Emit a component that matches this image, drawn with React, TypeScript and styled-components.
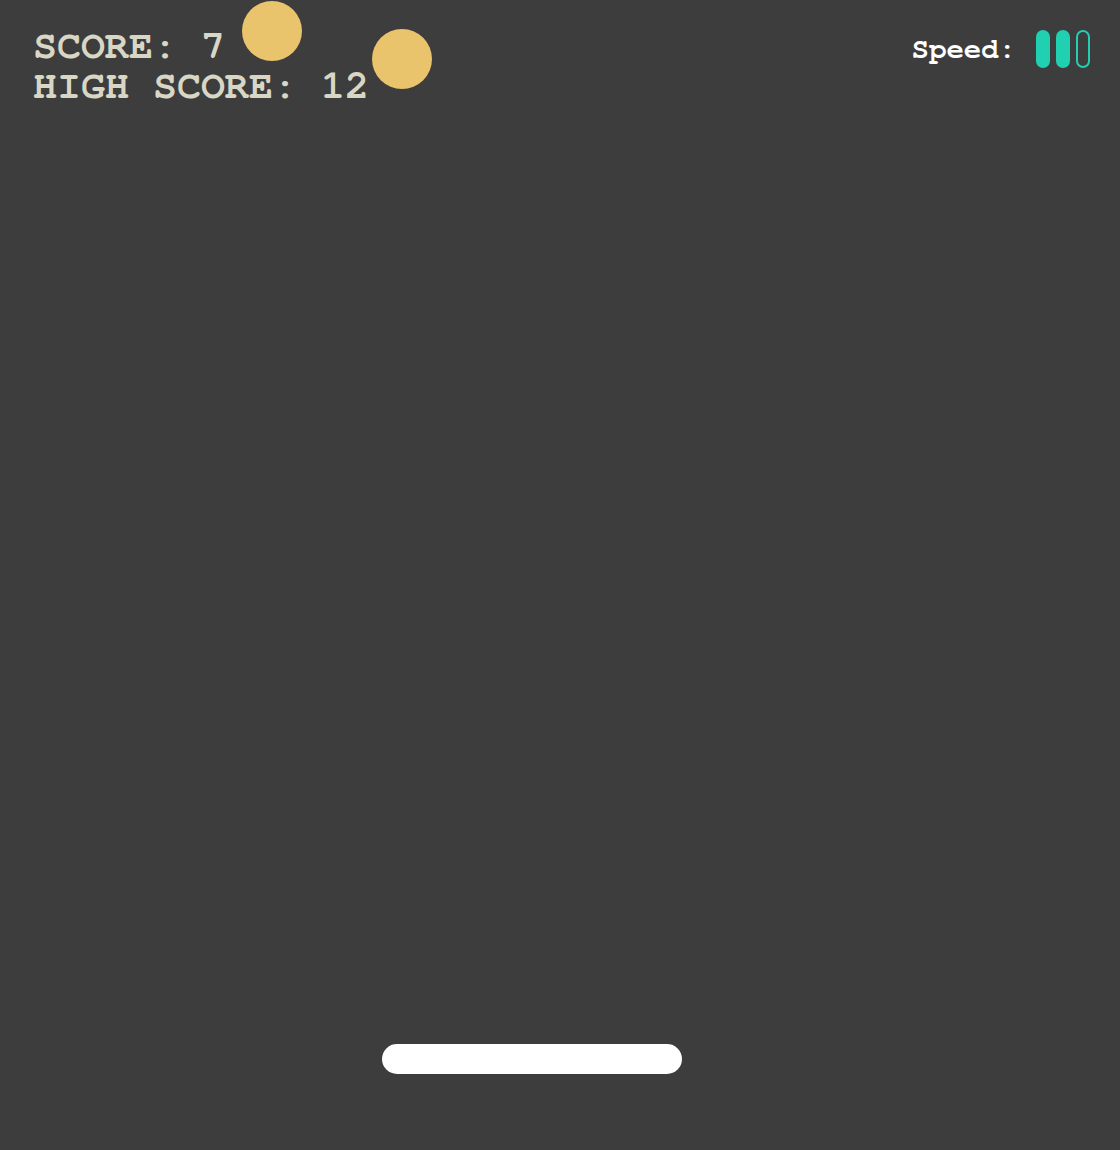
import React from "react";
import styled, { createGlobalStyle } from "styled-components";

const Global = createGlobalStyle`
  html, body { margin: 0; padding: 0; background: #3d3d3d; }
  #root { width: 1120px; height: 1150px; }
`;

const Board = styled.div`
  position: relative;
  width: 1120px;
  height: 1150px;
  background: #3d3d3d;
  overflow: hidden;
  display: flex;
  flex-direction: column;
  justify-content: space-between;
  font-family: "Nimbus Mono PS", "FreeMono", "Courier", "Courier New", "Liberation Mono", monospace;
`;

const TopBar = styled.div`
  display: flex;
  justify-content: space-between;
  align-items: flex-start;
  padding: 26px 30px 0 33px;
`;

const Scores = styled.div`
  display: flex;
  flex-direction: column;
`;

const ScoreLine = styled.div`
  font-size: 40px;
  line-height: 40px;
  font-weight: bold;
  color: #d8d6c4;
  white-space: pre;
`;

const SpeedBox = styled.div`
  display: flex;
  align-items: center;
  gap: 20px;
  margin-top: 4px;
`;

const SpeedLabel = styled.span`
  font-size: 29px;
  font-weight: bold;
  color: #ffffff;
  white-space: pre;
`;

const Pills = styled.div`
  display: flex;
  gap: 6px;
`;

const Pill = styled.div<{ $on: boolean }>`
  width: 14px;
  height: 38px;
  box-sizing: border-box;
  border-radius: 7px;
  border: 2px solid #20d0b0;
  background: ${(p) => (p.$on ? "#20d0b0" : "transparent")};
`;

const Ball = styled.div`
  position: absolute;
  width: 60px;
  height: 60px;
  border-radius: 50%;
  background: #e9c46c;
`;

const PaddleRow = styled.div`
  padding: 0 0 76px 382px;
`;

const Paddle = styled.div`
  width: 300px;
  height: 30px;
  border-radius: 15px;
  background: #ffffff;
`;

export default function App() {
  const speed = 2;
  const balls = [
    { x: 242, y: 1 },
    { x: 372, y: 29 },
  ];
  return (
    <>
      <Global />
      <Board>
        <TopBar>
          <Scores>
            <ScoreLine>SCORE: 7</ScoreLine>
            <ScoreLine>HIGH SCORE: 12</ScoreLine>
          </Scores>
          <SpeedBox>
            <SpeedLabel>Speed:</SpeedLabel>
            <Pills>
              {[0, 1, 2].map((i) => (
                <Pill key={i} $on={i < speed} />
              ))}
            </Pills>
          </SpeedBox>
        </TopBar>
        {balls.map((b, i) => (
          <Ball key={i} style={{ left: b.x, top: b.y }} />
        ))}
        <PaddleRow>
          <Paddle />
        </PaddleRow>
      </Board>
    </>
  );
}
